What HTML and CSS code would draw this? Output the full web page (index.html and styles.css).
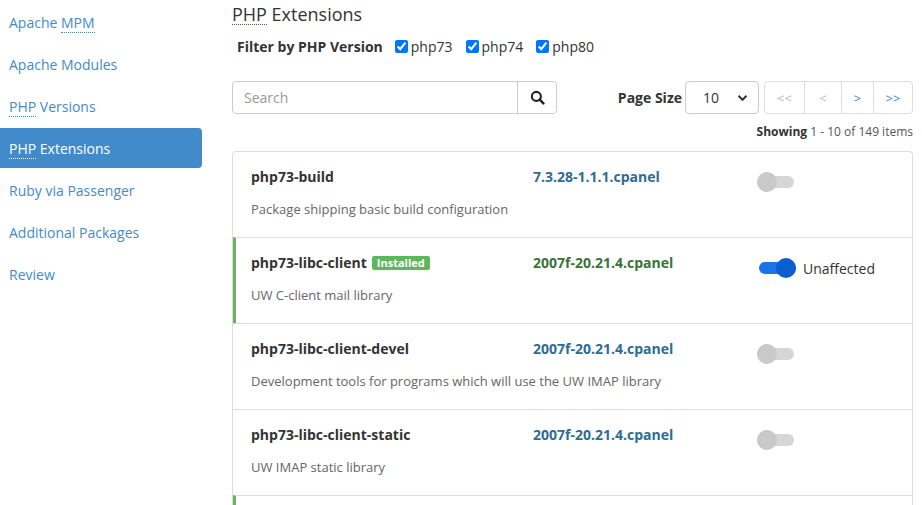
FILE: index.html
```html
<!DOCTYPE html>
<html>
<head>
<meta charset="utf-8">
<link rel="stylesheet" href="styles.css">
</head>
<body>
<div class="page">
  <nav class="sidebar">
    <a class="nav-item" href="#"><span>Apache <abbr>MPM</abbr></span></a>
    <a class="nav-item" href="#"><span>Apache Modules</span></a>
    <a class="nav-item" href="#"><span><abbr>PHP</abbr> Versions</span></a>
    <a class="nav-item active" href="#"><span><abbr>PHP</abbr> Extensions</span></a>
    <a class="nav-item" href="#"><span>Ruby via Passenger</span></a>
    <a class="nav-item" href="#"><span>Additional Packages</span></a>
    <a class="nav-item" href="#"><span>Review</span></a>
  </nav>
  <main class="main">
    <h1 class="title"><abbr>PHP</abbr> Extensions</h1>
    <div class="filter">
      <span class="filter-label">Filter by PHP Version</span>
      <label class="chk"><input type="checkbox" checked> php73</label>
      <label class="chk"><input type="checkbox" checked> php74</label>
      <label class="chk"><input type="checkbox" checked> php80</label>
    </div>
    <div class="toolbar">
      <div class="search">
        <input class="search-input" type="text" placeholder="Search">
        <button class="search-btn" type="button">
          <svg width="15" height="15" viewBox="0 0 16 16"><circle cx="6.8" cy="6.8" r="4.8" fill="none" stroke="#222" stroke-width="2.2"/><line x1="10.3" y1="10.3" x2="14.3" y2="14.3" stroke="#222" stroke-width="2.6" stroke-linecap="round"/></svg>
        </button>
      </div>
      <div class="paging">
        <span class="ps-label">Page Size</span>
        <div class="select"><span>10</span>
          <svg width="11" height="8" viewBox="0 0 11 8"><path d="M1.5 1.8 L5.5 5.8 L9.5 1.8" fill="none" stroke="#333" stroke-width="2"/></svg>
        </div>
        <div class="pager">
          <span class="pg disabled pg-wide">&lt;&lt;</span>
          <span class="pg disabled">&lt;</span>
          <span class="pg pg-narrow">&gt;</span>
          <span class="pg pg-wide">&gt;&gt;</span>
        </div>
      </div>
    </div>
    <div class="showing"><b>Showing</b> 1 - 10 of 149 items</div>
    <div class="list">
      <div class="row">
        <div class="name">php73-build</div>
        <div class="ver">7.3.28-1.1.1.cpanel</div>
        <div class="state"><span class="toggle"><span class="knob"></span></span></div>
        <div class="desc">Package shipping basic build configuration</div>
      </div>
      <div class="row installed">
        <div class="name">php73-libc-client <span class="badge">Installed</span></div>
        <div class="ver">2007f-20.21.4.cpanel</div>
        <div class="state"><span class="toggle on"><span class="knob"></span></span><span class="state-label">Unaffected</span></div>
        <div class="desc">UW C-client mail library</div>
      </div>
      <div class="row">
        <div class="name">php73-libc-client-devel</div>
        <div class="ver">2007f-20.21.4.cpanel</div>
        <div class="state"><span class="toggle"><span class="knob"></span></span></div>
        <div class="desc">Development tools for programs which will use the UW IMAP library</div>
      </div>
      <div class="row">
        <div class="name">php73-libc-client-static</div>
        <div class="ver">2007f-20.21.4.cpanel</div>
        <div class="state"><span class="toggle"><span class="knob"></span></span></div>
        <div class="desc">UW IMAP static library</div>
      </div>
      <div class="row installed row-stub"></div>
    </div>
  </main>
</div>
</body>
</html>
```
FILE: styles.css
```css
* { box-sizing: border-box; }
html, body { margin: 0; padding: 0; background: #fff; }
body { font-family: "Open Sans", "Liberation Sans", sans-serif; font-size: 14px; color: #333; }
abbr { text-decoration: none; border-bottom: 1px dotted #777; cursor: help; }

.page { display: flex; align-items: flex-start; }

.sidebar { width: 202px; flex: none; display: flex; flex-direction: column; gap: 2px; padding-top: 2px; }
.nav-item { display: flex; align-items: center; height: 40px; padding-left: 9px; color: #428bca; text-decoration: none; font-size: 14px; border-radius: 0 4px 4px 0; }
.nav-item abbr { border-bottom-color: #428bca; }
.nav-item.active { background: #428bca; color: #fff; }
.nav-item.active abbr { border-bottom-color: #fff; }

.main { flex: 1; padding: 1px 9px 0 30px; min-width: 0; }
.title { margin: 0; font-size: 18px; font-weight: 400; line-height: 26px; color: #333; }
.title abbr { border-bottom-color: #555; line-height: 20px; display: inline-block; }

.filter { display: flex; align-items: center; margin-top: 9px; height: 20px; padding-left: 5px; }
.filter-label { font-weight: 700; font-size: 14px; margin-right: 12px; }
.chk { display: flex; align-items: center; font-size: 14px; margin-right: 13px; }
.chk input { margin: 0 3px 0 0; width: 13px; height: 13px; }

.toolbar { display: flex; justify-content: space-between; align-items: center; margin-top: 25px; }
.search { display: flex; width: 325px; height: 33px; border: 1px solid #ccc; border-radius: 4px; }
.search-input { flex: 1; border: 0; outline: 0; padding: 0 11px; font-family: inherit; font-size: 14px; color: #555; background: transparent; border-radius: 4px 0 0 4px; }
.search-input::placeholder { color: #999; }
.search-btn { width: 39px; border: 0; border-left: 1px solid #ccc; background: #fff; display: flex; align-items: center; justify-content: center; padding: 0; border-radius: 0 4px 4px 0; }

.paging { display: flex; align-items: center; }
.ps-label { font-weight: 700; font-size: 14px; margin-right: 3px; }
.select { width: 74px; height: 33px; border: 1px solid #ccc; border-radius: 4px; display: flex; align-items: center; justify-content: space-between; padding: 0 10px 0 17px; font-size: 14px; color: #333; }
.pager { display: flex; margin-left: 5px; border: 1px solid #ddd; border-radius: 4px; height: 33px; }
.pg { width: 37px; display: flex; align-items: center; justify-content: center; color: #428bca; font-size: 13px; border-left: 1px solid #ddd; }
.pg:first-child { border-left: 0; }
.pg-narrow { width: 32px; }
.pg-wide { width: 39px; }
.pg.disabled { color: #bbb; }

.showing { text-align: right; font-size: 12px; margin-top: 9px; line-height: 17px; color: #555; }
.showing b { color: #333; }

.list { margin-top: 11px; border: 1px solid #ddd; border-bottom: 0; border-radius: 4px 4px 0 0; }
.row { display: grid; grid-template-columns: 282px 224px 1fr; grid-template-rows: 20px auto; row-gap: 13px; padding: 15px 18px 18px 18px; border-top: 1px solid #ddd; height: 86px; }
.row:first-child { border-top: 0; height: 85px; }
.row.installed { border-left: 3px solid #6bb35a; padding-left: 15px; }
.row-stub { height: 20px; }
.name { font-weight: 700; font-size: 14px; line-height: 20px; color: #333; display: flex; align-items: center; white-space: nowrap; }
.ver { font-weight: 700; font-size: 14px; line-height: 20px; color: #2d6c94; }
.installed .ver { color: #3a7338; }
.state { display: flex; align-items: center; height: 20px; margin-top: 5px; }
.desc { grid-column: 1 / -1; font-size: 13px; color: #666; line-height: 18px; }

.badge { display: inline-block; margin-left: 5px; background: #5cb85c; color: #fff; font-size: 11px; font-weight: 700; line-height: 14px; padding: 0 5px; border-radius: 2px; }

.toggle { position: relative; display: inline-block; width: 37px; height: 12px; background: #d6d6d6; border-radius: 6px; }
.knob { position: absolute; top: -4px; left: 0; width: 20px; height: 20px; border-radius: 50%; background: #c9c9c9; }
.toggle.on { background: #1a73e8; margin-left: 2px; }
.toggle.on .knob { left: auto; right: 0; background: #0b5fcf; }
.state-label { margin-left: 7px; font-size: 14px; color: #333; }
```
